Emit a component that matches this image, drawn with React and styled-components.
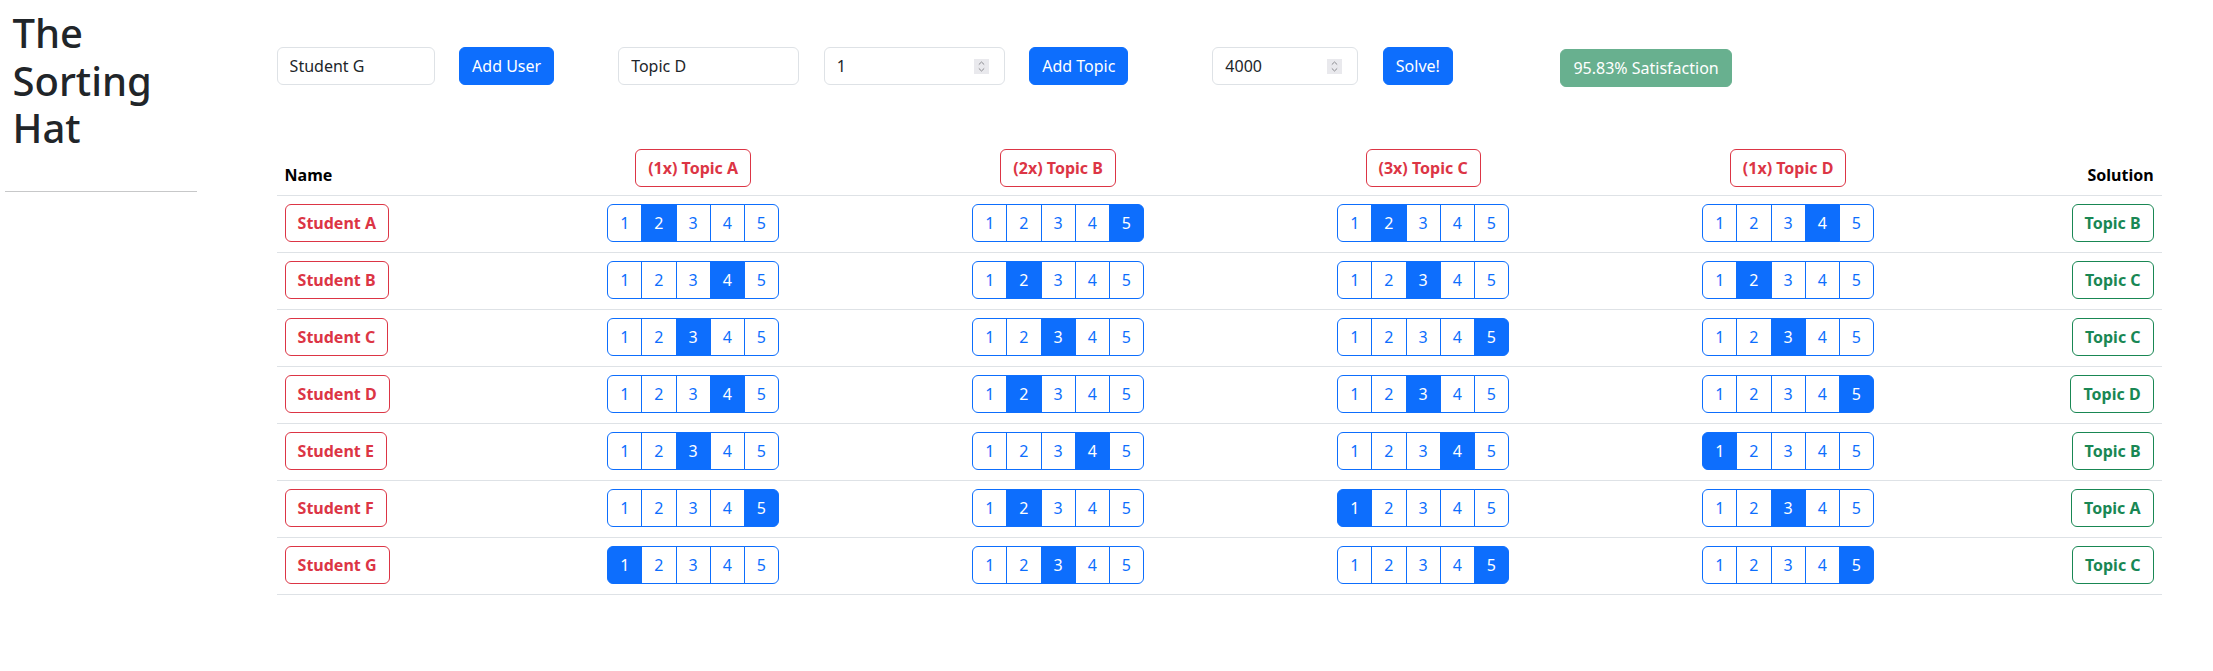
import React from "react";
import styled, { createGlobalStyle, css } from "styled-components";

const GlobalStyle = createGlobalStyle`
  *, *::before, *::after { box-sizing: border-box; }
  body {
    margin: 0;
    background: #fff;
    color: #212529;
    font-family: "Noto Sans", "Open Sans", sans-serif;
    font-size: 16px;
    line-height: 1.5;
  }
`;

const Page = styled.div`
  display: flex;
  align-items: flex-start;
`;

const Sidebar = styled.aside`
  width: 202px;
  flex: none;
  padding: 9px 5px 0;
`;

const Title = styled.h1`
  margin: 0;
  padding-left: 7.5px;
  font-size: 40px;
  font-weight: 500;
  line-height: 47.5px;
  color: #212529;
`;

const Rule = styled.hr`
  margin: 39px 0 0;
  border: 0;
  border-top: 1px solid #212529;
  opacity: 0.25;
`;

const Main = styled.main`
  flex: 1;
  padding: 47px 0 0 74.6px;
`;

const Toolbar = styled.div`
  display: flex;
  align-items: flex-start;
`;

const ToolGroup = styled.div`
  display: flex;
  align-items: flex-start;
  gap: 24.5px;
  margin-left: ${(p) => p.$offset || 0}px;
`;

const fieldBox = css`
  height: 38px;
  font-family: inherit;
  font-size: 16px;
  line-height: 1.5;
  color: #212529;
  background: #fff;
  border: 1px solid #dee2e6;
  border-radius: 6px;
`;

const TextField = styled.input`
  ${fieldBox};
  width: ${(p) => p.$width}px;
  padding: 6px 12px;
  outline: none;
`;

const NumberBox = styled.div`
  ${fieldBox};
  width: ${(p) => p.$width}px;
  display: flex;
  align-items: center;
  padding: 0 15px 0 12px;
`;

const BareInput = styled.input`
  flex: 1;
  min-width: 0;
  padding: 0;
  border: 0;
  outline: none;
  font: inherit;
  color: inherit;
  background: transparent;
`;

const Spinner = styled.svg`
  flex: none;
  display: block;
`;

function NumberField({ width, value }) {
  return (
    <NumberBox $width={width}>
      <BareInput type="text" inputMode="numeric" defaultValue={value} />
      <Spinner width="15" height="15" viewBox="0 0 15 15" aria-hidden="true">
        <rect width="15" height="15" fill="#e9e9ed" />
        <polyline points="4.8,5.6 7.5,3 10.2,5.6" fill="none" stroke="#8a8a8f" strokeWidth="1" />
        <polyline points="4.8,9.4 7.5,12 10.2,9.4" fill="none" stroke="#8a8a8f" strokeWidth="1" />
      </Spinner>
    </NumberBox>
  );
}

const variants = {
  primary: css`
    color: #fff;
    background: #0d6efd;
    border-color: #0d6efd;
  `,
  danger: css`
    color: #dc3545;
    background: #fff;
    border-color: #dc3545;
  `,
  success: css`
    color: #198754;
    background: #fff;
    border-color: #198754;
  `,
  solved: css`
    color: #fff;
    background: #198754;
    border-color: #198754;
    opacity: 0.65;
    margin-top: 2px;
  `,
};

const Button = styled.button`
  display: inline-block;
  flex: none;
  height: 38px;
  padding: 6px 12px;
  font-family: inherit;
  font-size: 16px;
  line-height: 1.5;
  font-weight: ${(p) => (p.$bold ? 700 : 400)};
  border: 1px solid transparent;
  border-radius: 6px;
  white-space: nowrap;
  cursor: pointer;
  ${(p) => variants[p.$variant || "primary"]}
`;

const COLUMNS = "234px repeat(4, 365px) 191px";

const Table = styled.div`
  width: 1885px;
  margin-top: 54px;
`;

const Row = styled.div`
  display: grid;
  grid-template-columns: ${COLUMNS};
  border-bottom: 1px solid #dee2e6;
`;

const HeadCell = styled.div`
  display: flex;
  align-items: flex-end;
  justify-content: ${(p) => p.$justify || "flex-start"};
  padding: 8px;
  font-weight: 700;
  color: #000;
`;

const Cell = styled.div`
  display: flex;
  align-items: flex-start;
  justify-content: ${(p) => p.$justify || "flex-start"};
  padding: 8px 8px 10px;
`;

const RatingGroup = styled.div`
  display: inline-flex;
`;

const RatingOption = styled.label`
  display: block;
  height: 38px;
  padding: 6px 12px;
  font-size: 16px;
  line-height: 1.5;
  border: 1px solid #0d6efd;
  color: ${(p) => (p.$active ? "#fff" : "#0d6efd")};
  background: ${(p) => (p.$active ? "#0d6efd" : "#fff")};
  cursor: pointer;
  & + & {
    margin-left: -1px;
  }
  &:first-child {
    border-radius: 6px 0 0 6px;
  }
  &:last-child {
    border-radius: 0 6px 6px 0;
  }
`;

const topics = [
  { name: "Topic A", weight: 1 },
  { name: "Topic B", weight: 2 },
  { name: "Topic C", weight: 3 },
  { name: "Topic D", weight: 1 },
];

const students = [
  { name: "Student A", ratings: [2, 5, 2, 4], solution: "Topic B" },
  { name: "Student B", ratings: [4, 2, 3, 2], solution: "Topic C" },
  { name: "Student C", ratings: [3, 3, 5, 3], solution: "Topic C" },
  { name: "Student D", ratings: [4, 2, 3, 5], solution: "Topic D" },
  { name: "Student E", ratings: [3, 4, 4, 1], solution: "Topic B" },
  { name: "Student F", ratings: [5, 2, 1, 3], solution: "Topic A" },
  { name: "Student G", ratings: [1, 3, 5, 5], solution: "Topic C" },
];

function Rating({ value }) {
  return (
    <RatingGroup>
      {[1, 2, 3, 4, 5].map((n) => (
        <RatingOption key={n} $active={n === value}>
          {n}
        </RatingOption>
      ))}
    </RatingGroup>
  );
}

export default function App() {
  return (
    <>
      <GlobalStyle />
      <Page>
        <Sidebar>
          <Title>
            The
            <br />
            Sorting
            <br />
            Hat
          </Title>
          <Rule />
        </Sidebar>
        <Main>
          <Toolbar>
            <ToolGroup>
              <TextField $width={158} type="text" defaultValue="Student G" />
              <Button $variant="primary">Add User</Button>
            </ToolGroup>
            <ToolGroup $offset={64}>
              <TextField $width={181} type="text" defaultValue="Topic D" />
              <NumberField width={181} value="1" />
              <Button $variant="primary">Add Topic</Button>
            </ToolGroup>
            <ToolGroup $offset={84}>
              <NumberField width={146} value="4000" />
              <Button $variant="primary">Solve!</Button>
            </ToolGroup>
            <ToolGroup $offset={107.5}>
              <Button $variant="solved" disabled>
                95.83% Satisfaction
              </Button>
            </ToolGroup>
          </Toolbar>

          <Table>
            <Row>
              <HeadCell>Name</HeadCell>
              {topics.map((t) => (
                <HeadCell key={t.name} $justify="center">
                  <Button $variant="danger" $bold>
                    ({t.weight}x) {t.name}
                  </Button>
                </HeadCell>
              ))}
              <HeadCell $justify="flex-end">Solution</HeadCell>
            </Row>
            {students.map((s) => (
              <Row key={s.name}>
                <Cell>
                  <Button $variant="danger" $bold>
                    {s.name}
                  </Button>
                </Cell>
                {s.ratings.map((r, i) => (
                  <Cell key={i} $justify="center">
                    <Rating value={r} />
                  </Cell>
                ))}
                <Cell $justify="flex-end">
                  <Button $variant="success" $bold>
                    {s.solution}
                  </Button>
                </Cell>
              </Row>
            ))}
          </Table>
        </Main>
      </Page>
    </>
  );
}
